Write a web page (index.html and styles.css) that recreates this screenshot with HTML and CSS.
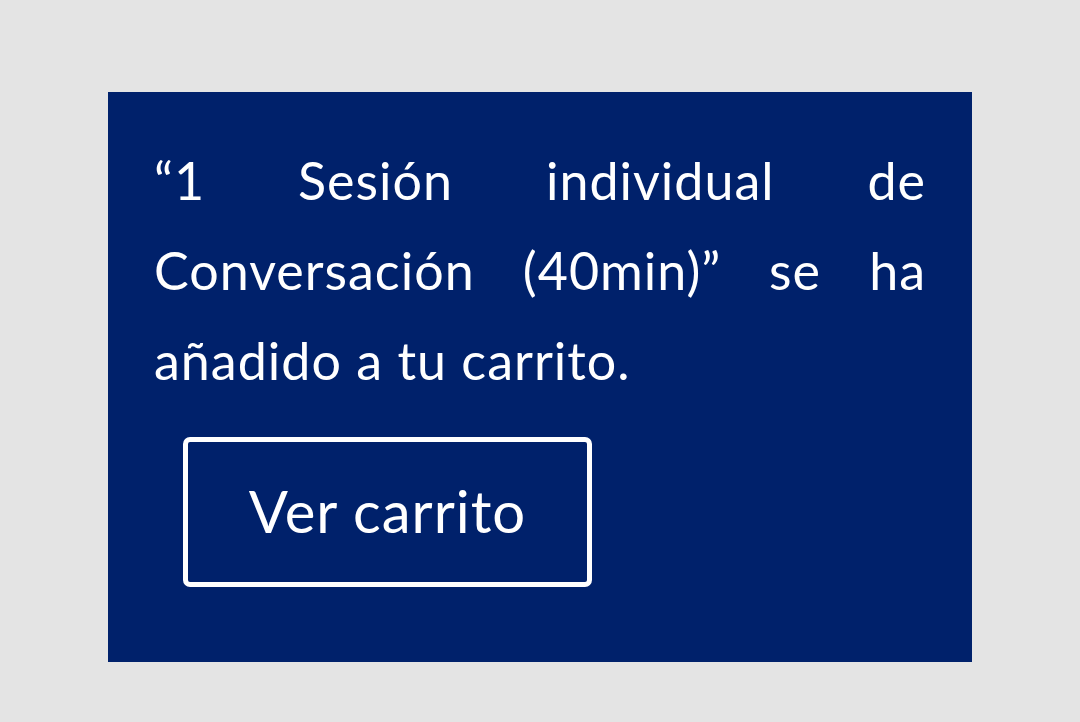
FILE: index.html
```html
<!DOCTYPE html>
<html lang="es">
<head>
<meta charset="utf-8">
<link rel="stylesheet" href="styles.css">
</head>
<body>
<div class="notice">
  <p class="message">“1 Sesión individual de Conversación (40min)” se ha añadido a tu carrito.</p>
  <a class="button" href="#">Ver carrito</a>
</div>
</body>
</html>
```
FILE: styles.css
```css
html, body {
  margin: 0;
  padding: 0;
  background: #e4e4e4;
}
body {
  padding: 92px 108px 60px;
  font-family: Lato, "Open Sans", sans-serif;
}
.notice {
  background: #00216b;
  color: #fff;
  padding: 43px 46px 75px;
  display: flex;
  flex-direction: column;
  align-items: flex-start;
}
.message {
  margin: 0;
  font-size: 52px;
  line-height: 90px;
  letter-spacing: 1px;
  text-align: justify;
  align-self: stretch;
}
.button {
  margin: 32px 0 0 29px;
  box-sizing: border-box;
  width: 409px;
  height: 150px;
  padding-bottom: 4px;
  border: 5px solid #fff;
  border-radius: 7px;
  color: #fff;
  text-decoration: none;
  font-size: 58px;
  letter-spacing: 1px;
  display: flex;
  align-items: center;
  justify-content: center;
}
```
